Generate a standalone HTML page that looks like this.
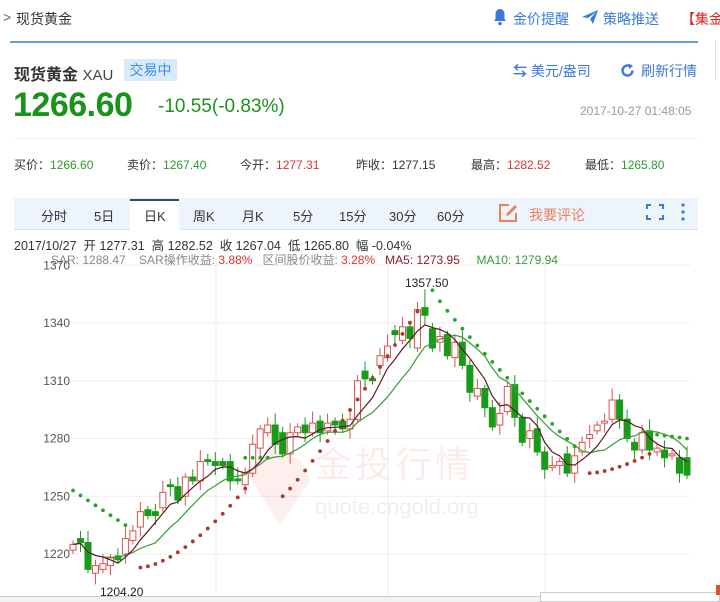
<!DOCTYPE html>
<html><head><meta charset="utf-8"><style>
*{margin:0;padding:0;box-sizing:border-box}
body{width:720px;height:602px;overflow:hidden;background:#fff;font-family:"Liberation Sans","Noto Sans CJK SC",sans-serif;position:relative;color:#333}
.a{position:absolute;white-space:nowrap}
.blue{color:#3a7bd5}
</style></head><body>
<div class="a" style="left:3px;top:9px;font-size:14px;color:#666">&gt;</div>
<div class="a" style="left:16px;top:9px;font-size:14px;color:#333">现货黄金</div>
<svg class="a" style="left:492px;top:8px" width="16" height="18" viewBox="0 0 16 18"><path d="M8 1c-3 0-4.5 2.5-4.5 5v5L2 13h12l-1.5-2V6C12.5 3.5 11 1 8 1z" fill="#3a7bd5"/><circle cx="8" cy="15.5" r="1.8" fill="#3a7bd5"/></svg>
<div class="a blue" style="left:513px;top:9px;font-size:14px">金价提醒</div>
<svg class="a" style="left:581px;top:9px" width="18" height="16" viewBox="0 0 18 16"><path d="M1 8L17 1L12 15L9 10L15 3L7 9z" fill="#3a7bd5"/></svg>
<div class="a blue" style="left:603px;top:9px;font-size:14px">策略推送</div>
<div class="a" style="left:681px;top:9px;font-size:14px;color:#d22">【集金</div>
<div class="a" style="left:10px;top:41px;width:688px;height:2px;background:#6d9bd8"></div>
<div class="a" style="left:715px;top:40px;width:1px;height:40px;background:#ddd"></div>

<div class="a" style="left:14px;top:61px;font-size:16px;font-weight:bold;color:#333">现货黄金 <span style="font-weight:normal;font-size:15px;color:#444">XAU</span></div>
<div class="a" style="left:124px;top:59px;width:53px;height:22px;background:#d9ebf9;color:#3a8ee6;font-size:14px;text-align:center;line-height:22px">交易中</div>
<div class="a blue" style="left:513px;top:61px;font-size:14px"><b style="font-size:14px">⇆</b> 美元/盎司</div>
<svg class="a" style="left:620px;top:63px" width="15" height="15" viewBox="0 0 15 15"><path d="M12.5 7.5A5 5 0 1 1 10 3.2" fill="none" stroke="#3a7bd5" stroke-width="2.4"/><path d="M9 0.5L13 3L9 6z" fill="#3a7bd5"/></svg>
<div class="a blue" style="left:641px;top:61px;font-size:14px">刷新行情</div>

<div class="a" style="left:13px;top:86px;font-size:34px;font-weight:bold;color:#1a931a;letter-spacing:-0.5px">1266.60</div>
<div class="a" style="left:158px;top:96px;font-size:19px;color:#1a931a">-10.55(-0.83%)</div>
<div class="a" style="left:580px;top:104px;font-size:12px;color:#999">2017-10-27 01:48:05</div>
<div class="a" style="left:14px;top:138px;width:684px;height:1px;background:#eee"></div>

<div class="a" style="left:14px;top:156px;font-size:12px;color:#333">买价：<span style="color:#2a9a2a">1266.60</span></div>
<div class="a" style="left:127px;top:156px;font-size:12px;color:#333">卖价：<span style="color:#2a9a2a">1267.40</span></div>
<div class="a" style="left:240px;top:156px;font-size:12px;color:#333">今开：<span style="color:#d33">1277.31</span></div>
<div class="a" style="left:356px;top:156px;font-size:12px;color:#333">昨收：1277.15</div>
<div class="a" style="left:471px;top:156px;font-size:12px;color:#333">最高：<span style="color:#d33">1282.52</span></div>
<div class="a" style="left:585px;top:156px;font-size:12px;color:#333">最低：<span style="color:#2a9a2a">1265.80</span></div>

<div class="a" style="left:14px;top:198px;width:684px;height:32px;background:#eef4fc;border-bottom:1px solid #dde6f0"></div>
<div class="a" style="left:130px;top:199px;width:49px;height:32px;background:#fff;border-top:2px solid #2f4a6a"></div>
<div class="a" style="top:206px;left:0;font-size:13px;color:#333">
<span class="a" style="left:41px">分时</span><span class="a" style="left:94px">5日</span><span class="a" style="left:144px">日K</span><span class="a" style="left:193px">周K</span><span class="a" style="left:242px">月K</span><span class="a" style="left:293px">5分</span><span class="a" style="left:339px">15分</span><span class="a" style="left:389px">30分</span><span class="a" style="left:437px">60分</span></div>
<svg class="a" style="left:498px;top:203px" width="22" height="20" viewBox="0 0 22 20"><path d="M11 2H2v16h16v-8" fill="none" stroke="#e8825a" stroke-width="2"/><path d="M8 13l1-3 8-8 2 2-8 8z" fill="#e8825a"/></svg>
<div class="a" style="left:529px;top:205px;font-size:14px;color:#e8825a">我要评论</div>
<svg class="a" style="left:646px;top:204px" width="18" height="16" viewBox="0 0 18 16" fill="none" stroke="#3a7bd5" stroke-width="2"><path d="M1 5V1h4M13 1h4v4M17 11v4h-4M5 15H1v-4"/></svg>
<svg class="a" style="left:680px;top:202px" width="6" height="20"><circle cx="3" cy="3" r="1.6" fill="#3a7bd5"/><circle cx="3" cy="10" r="1.6" fill="#3a7bd5"/><circle cx="3" cy="17" r="1.6" fill="#3a7bd5"/></svg>

<div class="a" style="left:14px;top:235px;font-size:12.5px;color:#333">2017/10/27 &nbsp;开 1277.31 &nbsp;高 1282.52 &nbsp;收 1267.04 &nbsp;低 1265.80 &nbsp;幅 -0.04%</div>
<div class="a" style="left:51px;top:251px;font-size:12px;color:#888">SAR: 1288.47 &nbsp;&nbsp;&nbsp;SAR操作收益: <span style="color:#d33">3.88%</span> &nbsp;&nbsp;区间股价收益: <span style="color:#d33">3.28%</span> &nbsp;&nbsp;<span style="color:#8a1c2c">MA5: 1273.95</span> &nbsp;&nbsp;&nbsp;&nbsp;<span style="color:#3a9a3a">MA10: 1279.94</span></div>

<svg id="c" class="a" style="left:0;top:0" width="720" height="602"></svg>
<div class="a" style="left:315px;top:436px;font-size:36px;color:rgba(220,80,60,0.11);letter-spacing:4px">金投行情</div>
<div class="a" style="left:315px;top:494px;font-size:22px;color:rgba(120,120,120,0.12)">quote.cngold.org</div>
<div class="a" style="left:0;top:596px;width:720px;height:6px;background:#f2f2f2;border-top:1px solid #ccc"></div>
<div class="a" style="left:540px;top:592px;width:180px;height:10px;background:#fff;border:1px solid #ccc"></div>
<div class="a" style="left:716px;top:585px;width:4px;height:10px;background:#e05030"></div>
<script>
var s=document.getElementById('c'),h='';
function Y(p){return 323+(1340-p)*1.925;}
[1370,1340,1310,1280,1250,1220].forEach(function(p){var y=Y(p);h+='<line x1="72" x2="690" y1="'+y+'" y2="'+y+'" stroke="#eee"/>';h+='<text x="70" y="'+(y+4)+'" font-size="12" fill="#555" text-anchor="end" font-family="Liberation Sans">'+p+'</text>';});
[216,388,545].forEach(function(x){h+='<line x1="'+x+'" x2="'+x+'" y1="262" y2="596" stroke="#eee"/>';});
h+='<path d="M245 470 L275 445 L300 460 L310 480 L280 525 z" fill="rgba(220,80,60,0.09)"/>';
var d=[[1222,1225],[1228,1226],[1226,1212],[1210,1214],[1212,1215],[1214,1218],[1219,1217],[1220,1228],[1227,1232],[1234,1242],[1243,1240],[1242,1240],[1244,1252],[1256,1255],[1255,1248],[1250,1260],[1260,1258],[1258,1268],[1269,1268],[1268,1266],[1268,1266],[1268,1258],[1259,1258],[1256,1262],[1262,1277],[1275,1285],[1283,1287],[1287,1277],[1283,1272],[1272,1283],[1283,1286],[1287,1283],[1283,1288],[1289,1283],[1284,1288],[1289,1287],[1289,1285],[1285,1290],[1290,1310],
[1315,1311],[1311,1310],[1318,1323],[1322,1328],[1336,1334],[1331,1338],[1338,1332],[1327,1347],[1348,1344],[1337,1327],[1330,1333],[1334,1323],[1322,1330],[1330,1318],[1318,1304],[1302,1306],[1306,1296],[1296,1286],[1287,1293],[1294,1307],[1308,1291],[1291,1278],[1280,1284],[1285,1273],[1273,1264],[1265,1266],[1266,1268],[1272,1262],[1262,1271],[1273,1278],[1280,1282],[1284,1287],[1288,1289],[1290,1300],[1300,1290],[1290,1280],[1278,1274],[1274,1283],[1284,1274],[1273,1275],[1274,1270],[1271,1272],[1270,1262],[1270,1261]];
var n=d.length,xs=[];
for(var i=0;i<n;i++)xs.push(73+i*(687-73)/(n-1));
var hl={3:1204.2,47:1357.5};
for(var i=0;i<n;i++){var o=d[i][0],c=d[i][1],up=c>=o,x=xs[i];var hi=Math.max(o,c)+2+(i*7%5),lo=Math.min(o,c)-2-(i*3%6);if(hl[i]){if(i==3)lo=1204.2;else hi=1357.5;}
var col=up?'#d9534f':'#1a9a1a';h+='<line x1="'+x+'" x2="'+x+'" y1="'+Y(hi)+'" y2="'+Y(lo)+'" stroke="'+col+'"/>';
var t=Y(Math.max(o,c)),b=Y(Math.min(o,c));if(b-t<1.5)b=t+1.5;
h+='<rect x="'+(x-3)+'" y="'+t+'" width="6" height="'+(b-t)+'" fill="'+(up?'#fff':'#1a9a1a')+'" stroke="'+col+'" stroke-width="1"/>';}
function ma(k,col){var p='';for(var i=0;i<n;i++){var a=0,m=0;for(var j=Math.max(0,i-k+1);j<=i;j++){a+=d[j][1];m++;}p+=(i?'L':'M')+xs[i].toFixed(1)+' '+Y(a/m).toFixed(1);}h+='<path d="'+p+'" fill="none" stroke="'+col+'" stroke-width="1.2"/>';}
ma(10,'#3a9a3a');ma(5,'#5a1a24');
function sar(a,b,p1,p2,col,pw){for(var i=a;i<=b;i++){var t=(i-a)/Math.max(1,b-a);var p=p1+(p2-p1)*Math.pow(t,pw);h+='<circle cx="'+xs[i]+'" cy="'+Y(p)+'" r="1.9" fill="'+col+'"/>';}}
sar(0,7,1253,1235,'#2aa52a',1);sar(9,23,1213,1254,'#a83a2a',1.6);sar(23,26,1270,1270,'#2aa52a',1);sar(28,46,1250,1346,'#a83a2a',1.1);sar(48,67,1357,1276,'#2aa52a',0.9);sar(69,77,1262,1272,'#a83a2a',1.6);sar(78,82,1282,1280,'#2aa52a',1);
h+='<text x="405" y="287" font-size="12" fill="#222" font-family="Liberation Sans">1357.50</text>';
h+='<text x="100" y="596" font-size="12" fill="#222" font-family="Liberation Sans">1204.20</text>';
s.innerHTML=h;
</script>
</body></html>
